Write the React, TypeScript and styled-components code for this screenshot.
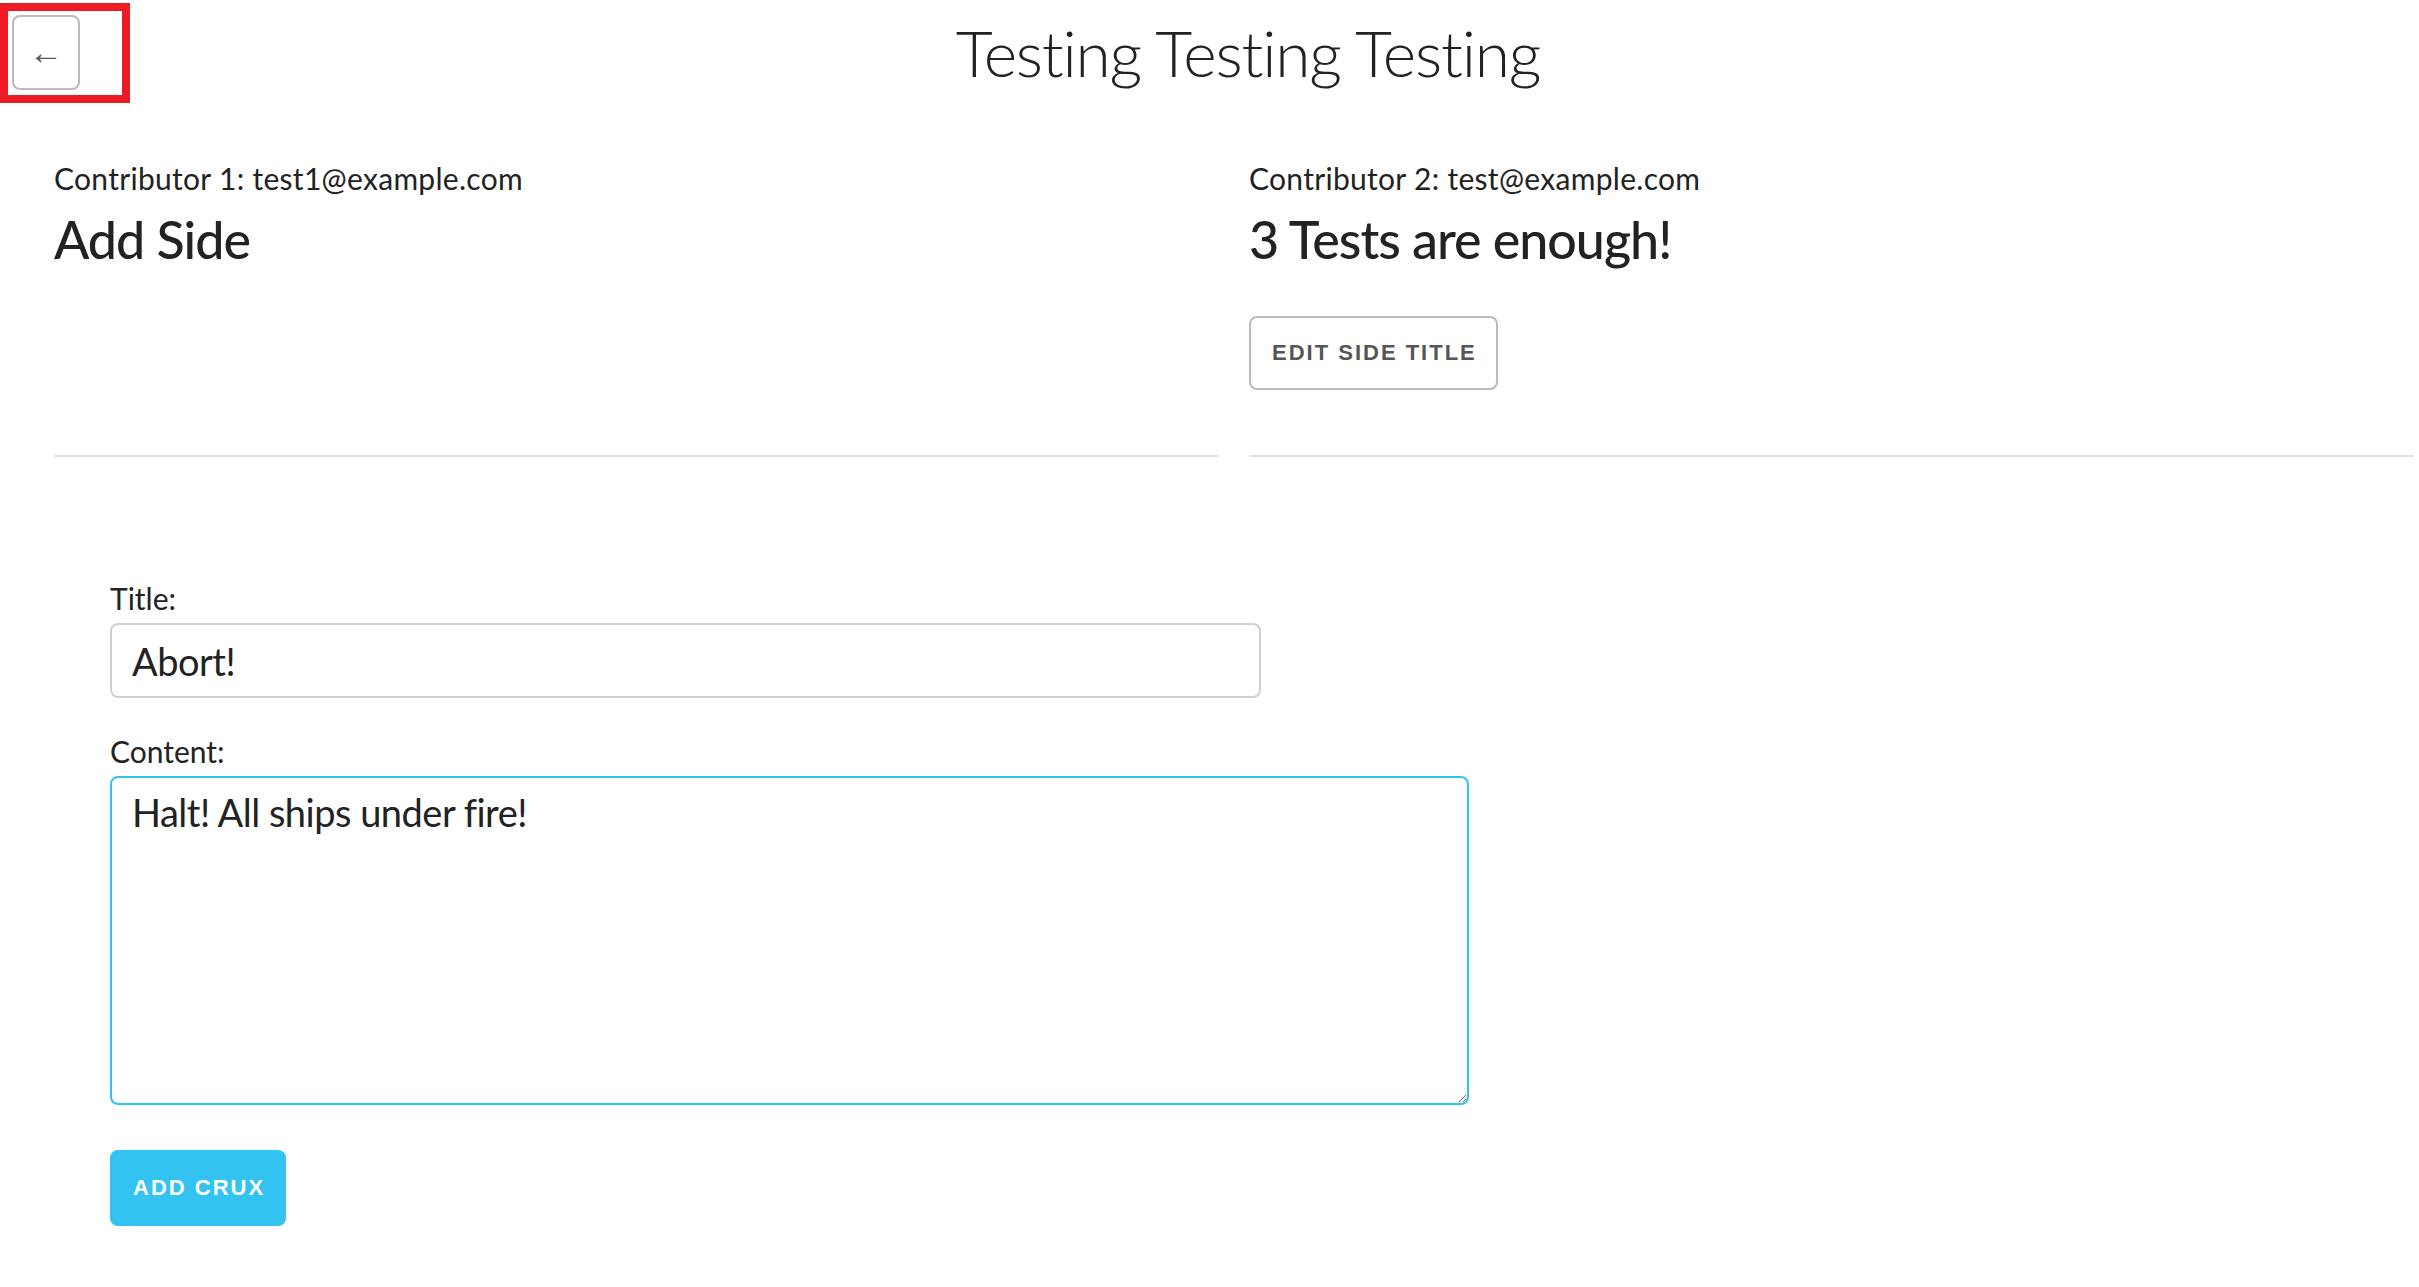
import React, { useEffect, useRef } from "react";
import styled, { createGlobalStyle } from "styled-components";

const GlobalStyle = createGlobalStyle`
  html, body {
    margin: 0;
    padding: 0;
    background: #ffffff;
  }
  body {
    font-family: "Lato", "Open Sans", sans-serif;
    color: #222222;
  }
  * { box-sizing: border-box; }
`;

const Page = styled.div`
  width: 2419px;
  min-height: 1287px;
`;

const Header = styled.header`
  display: flex;
  align-items: center;
  padding-top: 3px;
`;

const Highlight = styled.div`
  width: 130px;
  height: 100px;
  border: 8px solid #ed1c24;
  padding: 4px;
  flex-shrink: 0;
`;

const BackButton = styled.button`
  width: 68px;
  height: 75px;
  border: 2px solid #bbbbbb;
  border-radius: 8px;
  background: transparent;
  color: #555555;
  font-family: "Liberation Sans", Arial, sans-serif;
  font-size: 34px;
  line-height: 1;
  padding: 0 0 2px;
  cursor: pointer;
`;

const PageTitle = styled.h1`
  flex: 1;
  margin: 0;
  padding-right: 53px;
  text-align: center;
  font-weight: 300;
  font-size: 64px;
  line-height: 80px;
  letter-spacing: -1.2px;
  color: #222222;
`;

const Sides = styled.section`
  display: grid;
  grid-template-columns: 1165px 1165px;
  column-gap: 30px;
  padding-left: 54px;
  margin-top: 57px;
`;

const SideColumn = styled.div`
  display: flex;
  flex-direction: column;
`;

const Contributor = styled.div`
  font-size: 30px;
  line-height: 36px;
  letter-spacing: 0.3px;
`;

const SideHeading = styled.h2`
  margin: 12px 0 0;
  font-size: 52px;
  line-height: 62px;
  font-weight: 500;
  letter-spacing: -1px;
`;

const OutlineButton = styled.button`
  align-self: flex-start;
  margin-top: 46px;
  height: 74px;
  padding: 0 19px 0 21px;
  border: 2px solid #bbbbbb;
  border-radius: 8px;
  background: transparent;
  color: #555555;
  font-family: "Liberation Sans", Arial, sans-serif;
  font-size: 22px;
  font-weight: 700;
  letter-spacing: 2px;
  text-transform: uppercase;
  cursor: pointer;
`;

const Divider = styled.hr<{ $gap?: number }>`
  width: 100%;
  margin: ${(p) => (p.$gap !== undefined ? `${p.$gap}px` : "auto")} 0 0;
  border: 0;
  border-top: 2px solid #e1e1e1;
`;

const CruxForm = styled.form`
  display: flex;
  flex-direction: column;
  align-items: flex-start;
  padding-left: 110px;
  margin-top: 123px;
`;

const FieldLabel = styled.label`
  display: block;
  font-size: 30px;
  line-height: 36px;
  margin-bottom: 7px;
`;

const Field = styled.div<{ $gap?: number }>`
  margin-top: ${(p) => p.$gap ?? 0}px;
`;

const TextInput = styled.input`
  width: 1151px;
  height: 75px;
  padding: 12px 20px;
  border: 2px solid #d1d1d1;
  border-radius: 8px;
  font-family: "Lato", sans-serif;
  font-size: 38px;
  letter-spacing: -0.5px;
  color: #222222;
  outline: none;
`;

const TextArea = styled.textarea`
  display: block;
  width: 1359px;
  height: 329px;
  padding: 9px 20px;
  border: 2px solid #33c3f0;
  border-radius: 8px;
  font-family: "Lato", sans-serif;
  font-size: 38px;
  letter-spacing: -0.5px;
  line-height: 50px;
  color: #222222;
  outline: none;
  caret-color: #000000;
`;

const PrimaryButton = styled.button`
  margin-top: 45px;
  height: 76px;
  padding: 0 19px 0 21px;
  border: 2px solid #33c3f0;
  border-radius: 8px;
  background: #33c3f0;
  color: #ffffff;
  font-family: "Liberation Sans", Arial, sans-serif;
  font-size: 22px;
  font-weight: 700;
  letter-spacing: 2px;
  text-transform: uppercase;
  cursor: pointer;
`;

export default function App() {
  const areaRef = useRef<HTMLTextAreaElement>(null);
  useEffect(() => {
    const el = areaRef.current;
    if (el) {
      el.focus();
      const len = el.value.length;
      el.setSelectionRange(len, len);
    }
  }, []);

  return (
    <Page>
      <GlobalStyle />
      <Header>
        <Highlight>
          <BackButton type="button">←</BackButton>
        </Highlight>
        <PageTitle>Testing Testing Testing</PageTitle>
      </Header>
      <Sides>
        <SideColumn>
          <Contributor>Contributor 1: test1@example.com</Contributor>
          <SideHeading>Add Side</SideHeading>
          <Divider />
        </SideColumn>
        <SideColumn>
          <Contributor>Contributor 2: test@example.com</Contributor>
          <SideHeading>3 Tests are enough!</SideHeading>
          <OutlineButton type="button">Edit Side Title</OutlineButton>
          <Divider $gap={65} />
        </SideColumn>
      </Sides>
      <CruxForm onSubmit={(e) => e.preventDefault()}>
        <Field>
          <FieldLabel htmlFor="crux-title">Title:</FieldLabel>
          <TextInput id="crux-title" defaultValue="Abort!" />
        </Field>
        <Field $gap={35}>
          <FieldLabel htmlFor="crux-content">Content:</FieldLabel>
          <TextArea
            id="crux-content"
            ref={areaRef}
            defaultValue="Halt! All ships under fire!"
          />
        </Field>
        <PrimaryButton type="submit">Add Crux</PrimaryButton>
      </CruxForm>
    </Page>
  );
}
